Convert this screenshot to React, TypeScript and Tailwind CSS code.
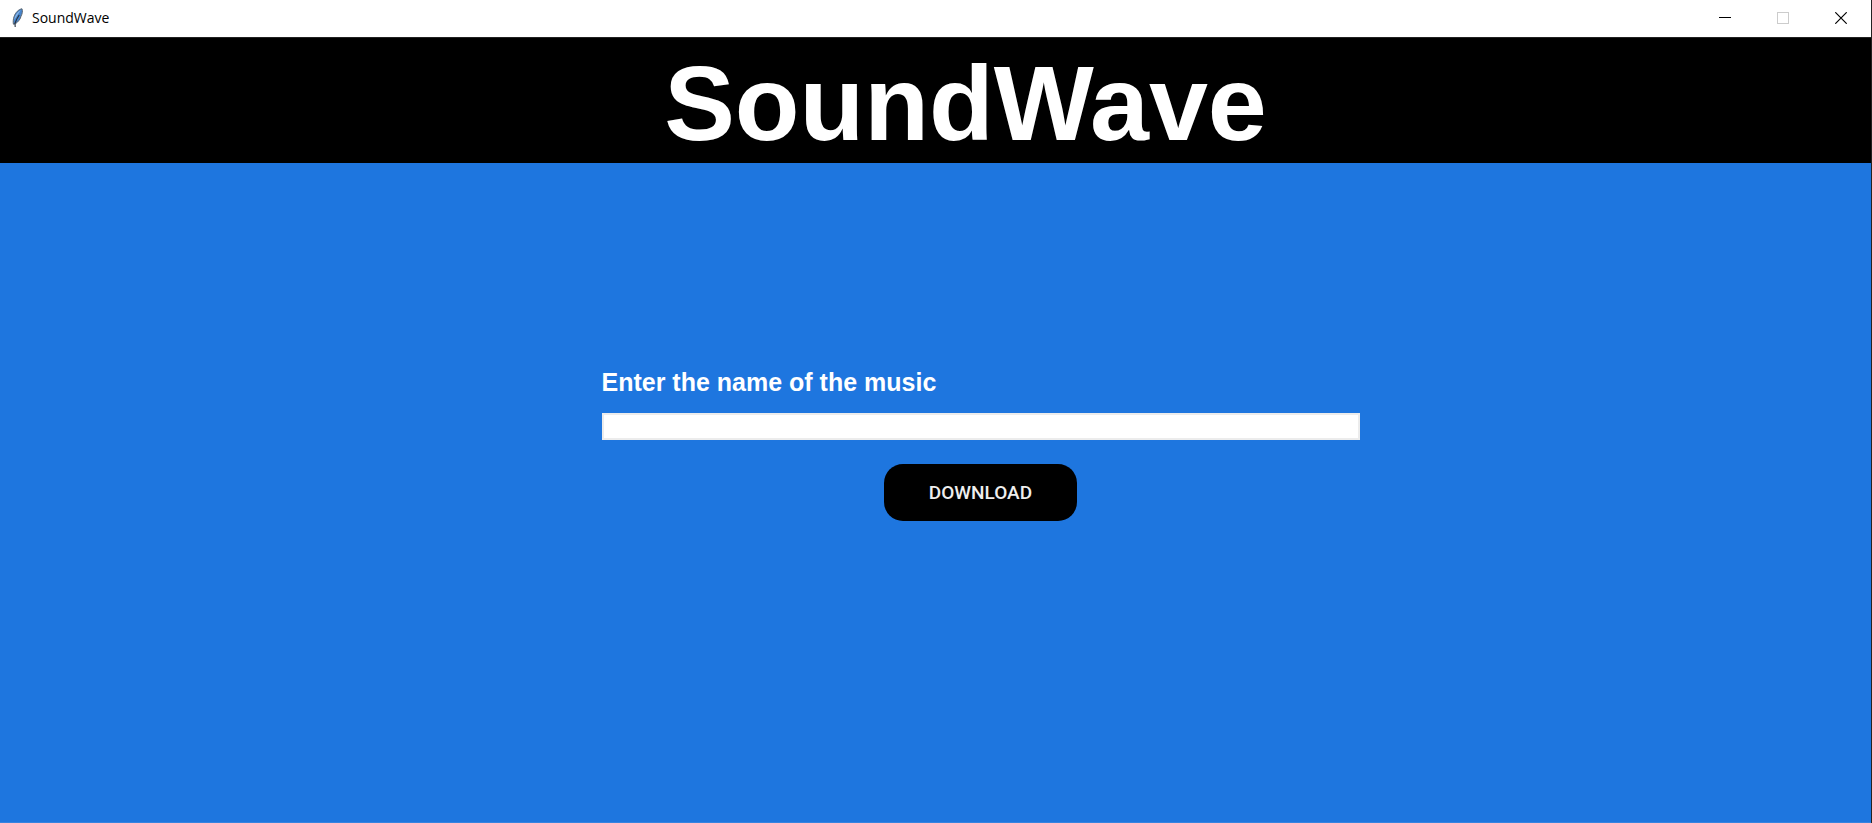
function FeatherIcon() {
  return (
    <svg width="12" height="20" viewBox="0 0 12 20" aria-hidden="true">
      <path d="M10 0.8C6.8 1.2 3.4 4.4 2 8.8C1.2 11.4 1 13.8 1.4 16.2L3.4 15.8C6.6 13.6 8.6 10.6 9 8.2C10.4 5.6 10.8 3 10 0.8Z" fill="#4684cc" stroke="#5c6670" strokeWidth="1" />
      <path d="M8.8 2.2C5 4 2.8 7.6 2.2 12C4 9 6.4 5.6 8.8 2.2Z" fill="#8fb9e6" />
      <path d="M7.2 7C5.4 9.6 4 12.4 3 15.2L3.2 19" fill="none" stroke="#26303c" strokeWidth="1.1" />
    </svg>
  );
}

function TitleBar() {
  return (
    <div className="flex h-[37px] items-start bg-white pl-3">
      <div className="flex h-9 grow items-center gap-2">
        <FeatherIcon />
        <span className="font-['Open_Sans',sans-serif] text-[14px] leading-5 text-black">SoundWave</span>
      </div>
      <div className="flex h-9 pr-px">
        <button type="button" aria-label="Minimize" className="flex w-[58px] items-center justify-center">
          <svg width="12" height="12" viewBox="0 0 12 12" shapeRendering="crispEdges" aria-hidden="true">
            <path d="M0 5.5H12" stroke="#000" />
          </svg>
        </button>
        <button type="button" aria-label="Maximize" disabled className="flex w-[58px] items-center justify-center">
          <svg width="12" height="12" viewBox="0 0 12 12" shapeRendering="crispEdges" aria-hidden="true">
            <path d="M0.5 0.5H11.5V11.5H0.5Z" fill="none" stroke="#ccc" />
          </svg>
        </button>
        <button type="button" aria-label="Close" className="flex w-[58px] items-center justify-center">
          <svg width="12" height="12" viewBox="0 0 12 12" aria-hidden="true">
            <path d="M0.3 0.3L11.7 11.7M11.7 0.3L0.3 11.7" stroke="#000" strokeWidth="1.2" />
          </svg>
        </button>
      </div>
    </div>
  );
}

export default function App() {
  return (
    <div className="flex min-h-screen flex-col border-r border-[#222] bg-[#1e76df] font-['Liberation_Sans',Arial,sans-serif]">
      <TitleBar />
      <header className="flex h-[126px] items-center justify-center border-t border-[#222] bg-black pt-[5px] pl-[60px]">
        <h1 className="text-[106px] leading-[120px] font-bold text-white">SoundWave</h1>
      </header>
      <main className="flex grow flex-col items-center border-b border-[#3684e0] pt-[203px] pl-[90px]">
        <form className="flex w-[758px] flex-col" onSubmit={(event) => event.preventDefault()}>
          <label htmlFor="music" className="text-[25px] leading-8 font-bold text-white">
            Enter the name of the music
          </label>
          <input
            id="music"
            type="text"
            className="mt-[15px] h-[27px] border-2 border-[#ececec] bg-white px-1 text-base text-black outline-none"
          />
          <button
            type="submit"
            className="mt-6 h-[57px] w-[193px] self-center rounded-[19px] bg-black font-[Roboto,sans-serif] text-[19px] leading-6 font-medium text-[#eee]"
          >
            DOWNLOAD
          </button>
        </form>
      </main>
    </div>
  );
}
